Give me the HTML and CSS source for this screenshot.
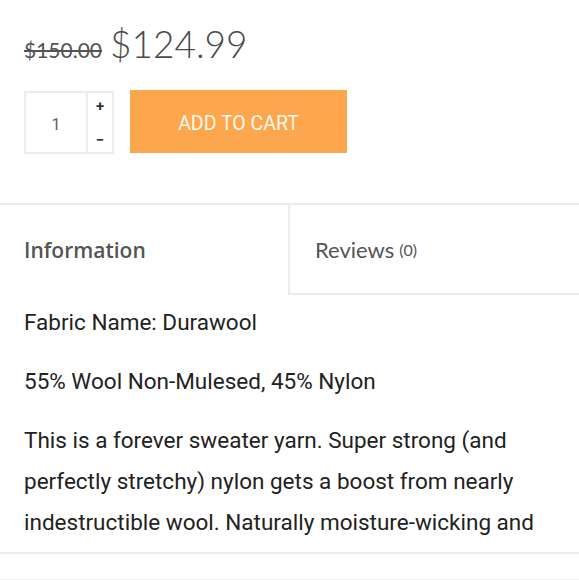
FILE: index.html
```html
<!DOCTYPE html>
<html>
<head>
<meta charset="utf-8">
<link rel="stylesheet" href="styles.css">
</head>
<body>
<div class="product">
  <div class="price">
    <span class="old">$150.00</span>
    <span class="new">$124.99</span>
  </div>
  <div class="buy">
    <div class="qty">
      <div class="qty-val">1</div>
      <div class="qty-btns">
        <span class="plus">+</span>
        <span class="minus">−</span>
      </div>
    </div>
    <button class="cart">ADD TO CART</button>
  </div>
</div>
<div class="tabs">
  <div class="tab active">Information</div>
  <div class="tab">Reviews <small>(0)</small></div>
</div>
<div class="content">
  <p>Fabric Name: Durawool</p>
  <p>55% Wool Non-Mulesed, 45% Nylon</p>
  <p>This is a forever sweater yarn. Super strong (and perfectly stretchy) nylon gets a boost from nearly indestructible wool. Naturally moisture-wicking and temperature-regulating.</p>
</div>
<div class="bottom-bar"></div>
</body>
</html>
```

FILE: styles.css
```css
html, body {
  margin: 0;
  padding: 0;
  background: #fff;
  overflow: hidden;
}
body {
  font-family: Roboto, "Liberation Sans", sans-serif;
  color: #222;
}
.product {
  padding: 0 24px;
}
.price {
  display: flex;
  align-items: baseline;
  gap: 8px;
  padding-top: 21px;
  height: 48px;
  font-family: Lato, "Open Sans", sans-serif;
  color: #4a4a4a;
}
.old {
  font-size: 21px;
  text-decoration: line-through;
  color: #555;
}
.new {
  font-size: 37px;
  font-weight: 300;
}
.buy {
  display: flex;
  align-items: flex-start;
  gap: 16px;
  margin-top: 21px;
}
.qty {
  display: flex;
  width: 90px;
  height: 63px;
  margin-top: 1px;
  box-sizing: border-box;
  border: 2px solid #ececec;
}
.qty-val {
  width: 62px;
  border-right: 2px solid #ececec;
  display: flex;
  align-items: center;
  justify-content: center;
  padding-top: 3px;
  box-sizing: border-box;
  font-size: 17px;
  color: #666;
}
.qty-btns {
  flex: 1;
  display: flex;
  flex-direction: column;
  justify-content: space-between;
  align-items: center;
  padding: 4px 0 3px;
  font-size: 15px;
  font-weight: 700;
  color: #333;
}
.cart {
  width: 217px;
  height: 63px;
  border: none;
  background: #fca74d;
  color: #fff7ec;
  font-family: Roboto, "Liberation Sans", sans-serif;
  font-size: 19.5px;
  padding: 3px 0 0;
}
.tabs {
  display: flex;
  margin-top: 49px;
  border-top: 2px solid #ececec;
  height: 90px;
}
.tab {
  flex: 1;
  display: flex;
  align-items: center;
  padding-left: 25px;
  font-family: Lato, "Open Sans", sans-serif;
  font-size: 22px;
  color: #555;
  border-left: 2px solid #ececec;
  border-bottom: 2px solid #ececec;
}
.tab small {
  font-size: 16px;
  margin-left: 5px;
}
.tab.active {
  border: none;
  padding-left: 24px;
  font-family: "Open Sans", Lato, sans-serif;
  font-size: 21px;
  font-weight: 600;
}
.content {
  padding: 7px 24px 0;
  font-size: 22.5px;
  line-height: 41px;
}
.content p {
  margin: 0 0 18px;
}
.bottom-bar {
  position: fixed;
  left: 0;
  right: 0;
  bottom: 0;
  height: 25px;
  background: #fff;
  border-top: 2px solid #ececec;
  border-bottom: 1px solid #f2f2f2;
}
```
